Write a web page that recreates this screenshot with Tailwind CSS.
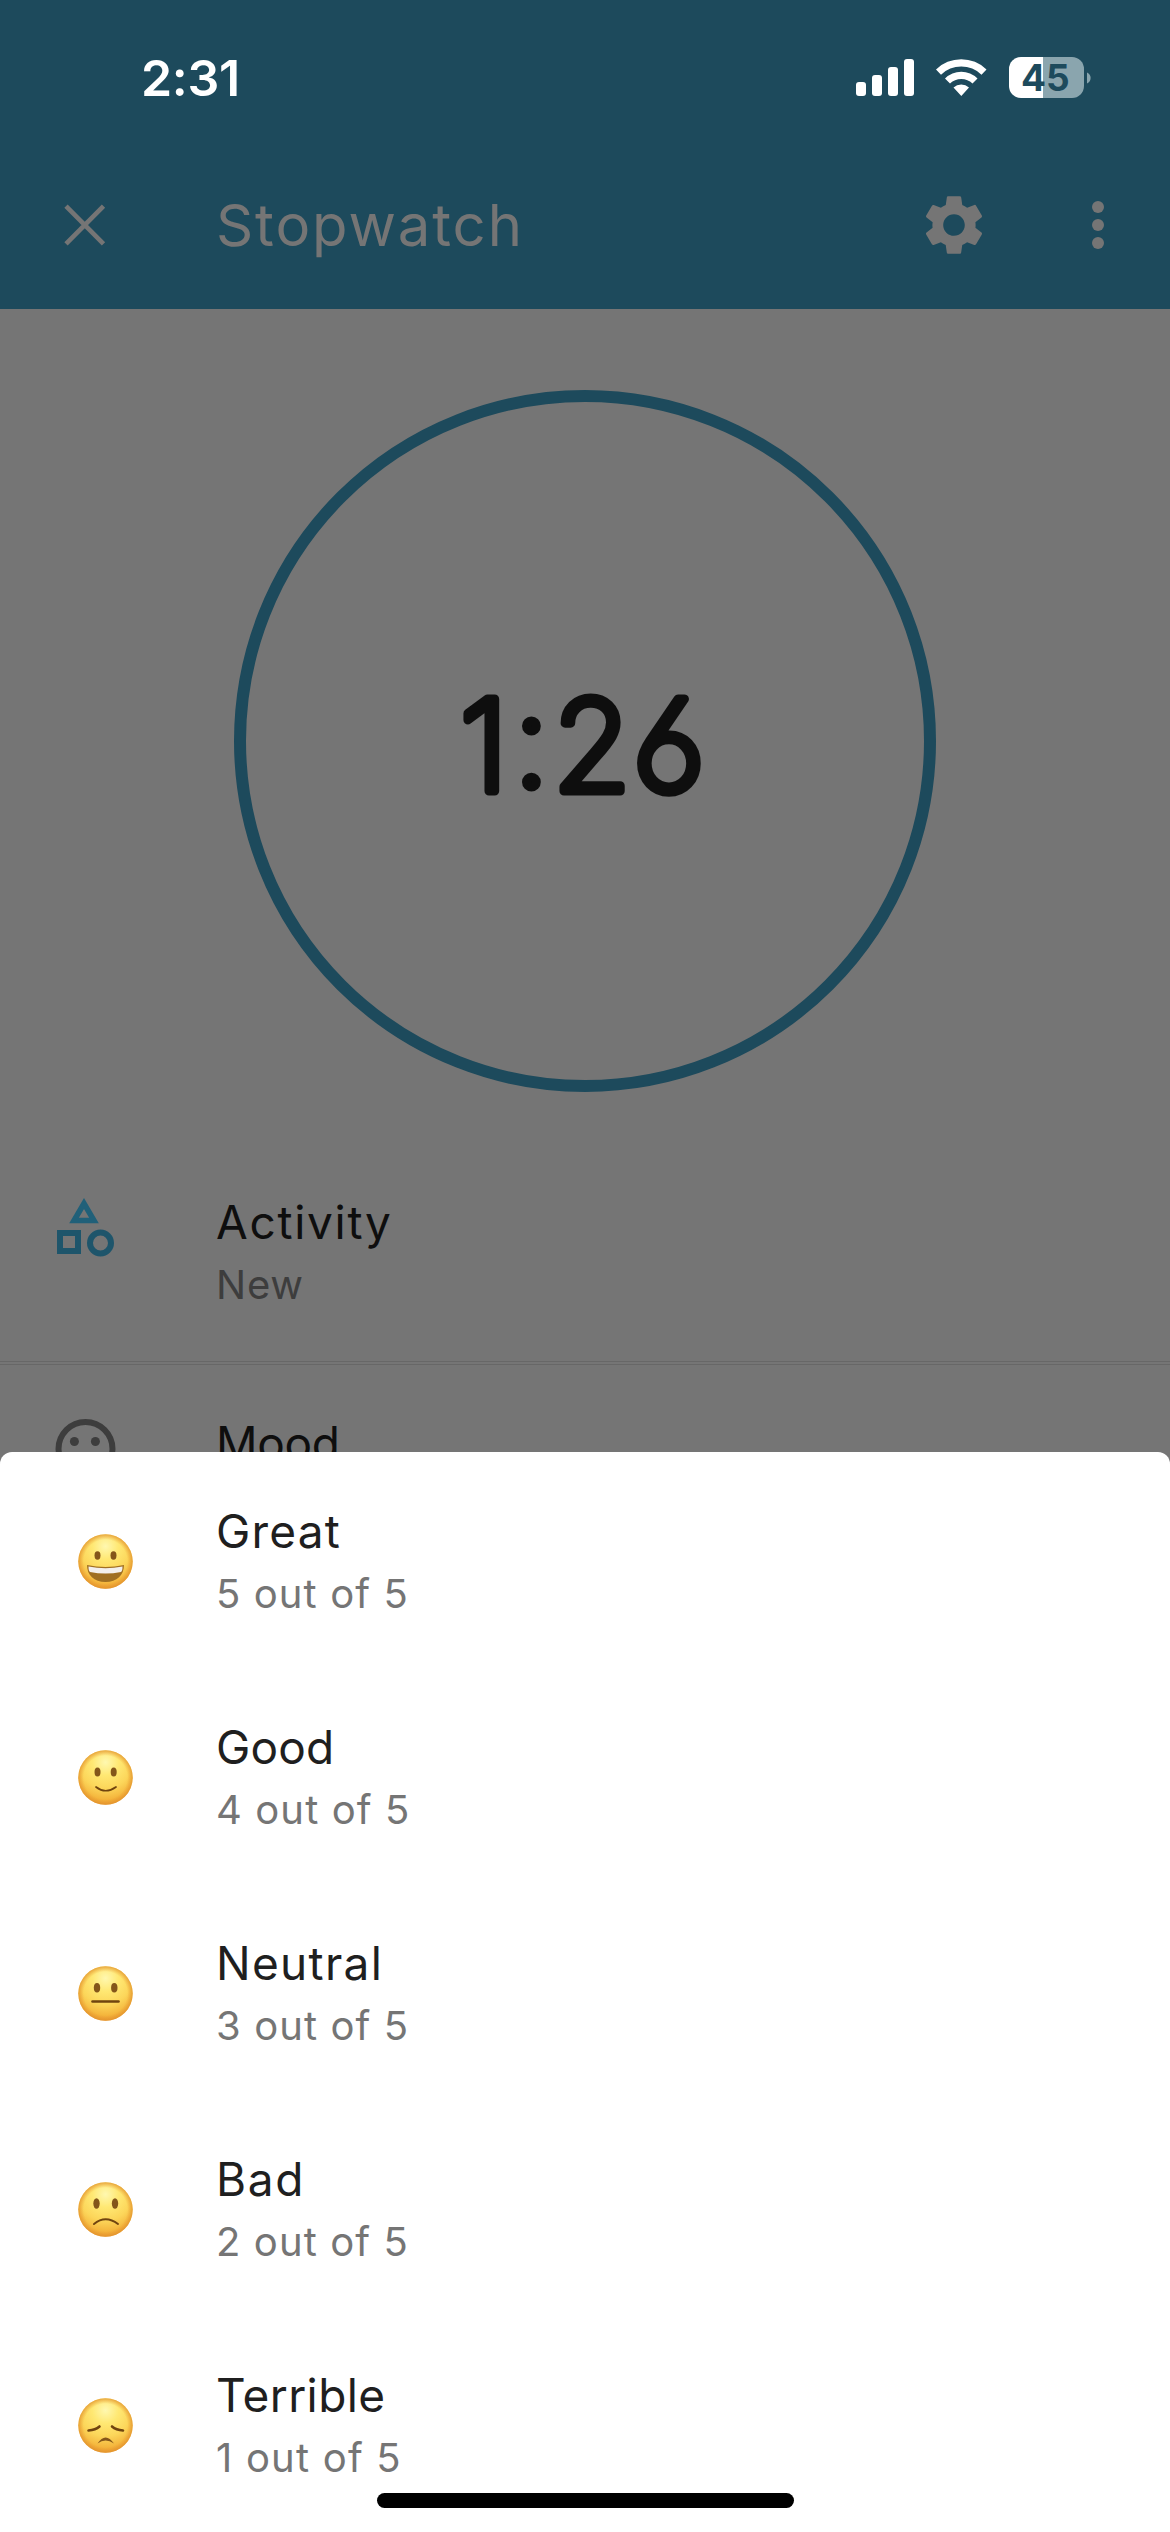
<!DOCTYPE html>
<html lang="en">
<head>
<meta charset="utf-8">
<title>Stopwatch</title>
<script src="https://cdn.jsdelivr.net/npm/@tailwindcss/browser@4"></script>
</head>
<body class="bg-[#757575] font-['Inter',sans-serif]">
<svg class="absolute size-0" aria-hidden="true">
  <defs>
    <radialGradient id="face" cx="0.5" cy="0.22" r="0.8">
      <stop offset="0" stop-color="#fff8b0"/><stop offset="0.3" stop-color="#ffe873"/><stop offset="0.6" stop-color="#fcd65a"/><stop offset="0.85" stop-color="#f4b53c"/><stop offset="1" stop-color="#ec9c30"/>
    </radialGradient>
    <radialGradient id="rim" cx="0.5" cy="0.5" r="0.5">
      <stop offset="0.8" stop-color="#e8962f" stop-opacity="0"/><stop offset="1" stop-color="#e0902c" stop-opacity="0.75"/>
    </radialGradient>
    <g id="head"><circle cx="27.5" cy="27.5" r="27.2" fill="url(#face)"/><circle cx="27.5" cy="27.5" r="27.2" fill="url(#rim)"/></g>
  </defs>
</svg>
<main class="relative flex h-[2532px] w-[1170px] flex-col overflow-hidden">
  <header class="h-[309px] shrink-0 bg-[#1d4a5c]">
    <div class="flex h-[156px] items-center pl-[141px] pr-[79px]">
      <span class="grow text-[50px] font-semibold tracking-[-0.3px] text-white">2:31</span>
      <svg class="h-[42px] w-[236px] overflow-visible" viewBox="0 0 236 42" fill="#fff">
        <rect x="1" y="25" width="10" height="14" rx="3"/><rect x="17" y="18" width="10" height="21" rx="3"/><rect x="33" y="10" width="10" height="29" rx="3"/><rect x="49" y="2" width="10" height="37" rx="3"/>
        <path d="M81 12.5a36 36 0 0 1 50.500 0l-5 5.200a29 29 0 0 0-40.500 0zM90 21.500a23 23 0 0 1 32.500 0l-5 5a16 16 0 0 0-22.500 0zM98.500 30.500a11.500 11.500 0 0 1 15.500 0l-7.700 8.500z"/>
        <path d="M166 0H188V41H166a12 12 0 0 1-12-12V12a12 12 0 0 1 12-12z"/>
        <path d="M188 0H217a12 12 0 0 1 12 12V29a12 12 0 0 1-12 12H188z" fill="#8aa5ae"/>
        <path d="M232 15.500a6 6 0 0 1 0 11z" fill="#8aa5ae"/>
        <text x="166" y="34" font-family="Inter, sans-serif" font-weight="700" font-size="37" fill="#1d4a5c">45</text>
      </svg>
    </div>
    <div class="flex h-[138px] items-center pl-12 pr-9 text-[#757575]">
      <svg class="size-[72px]" viewBox="0 0 24 24" fill="none" stroke="currentColor" stroke-width="1.550"><path d="M6 5.700 18.500 18.300M18.500 5.700 6 18.300"/></svg>
      <h1 class="ml-24 grow text-[58px] tracking-[1.9px]">Stopwatch</h1>
      <svg class="size-[72px]" viewBox="0 0 24 24" fill="currentColor"><path d="M19.140 12.940c.040-.300.060-.610.060-.940 0-.320-.020-.640-.070-.940l2.030-1.580a.49.490 0 0 0 .120-.610l-1.920-3.320a.488.488 0 0 0-.590-.220l-2.390.960c-.500-.380-1.030-.700-1.620-.940l-.360-2.540a.484.484 0 0 0-.480-.410h-3.840c-.240 0-.430.170-.470.410l-.360 2.540c-.590.240-1.130.570-1.620.940l-2.390-.960c-.220-.080-.470 0-.590.220L2.740 8.870c-.120.210-.080.470.120.610l2.030 1.580c-.050.300-.090.630-.090.940s.020.640.070.940l-2.030 1.580a.49.490 0 0 0-.120.610l1.920 3.320c.120.220.370.290.590.220l2.390-.960c.500.380 1.030.700 1.620.940l.360 2.540c.050.240.240.410.480.410h3.840c.240 0 .440-.170.470-.410l.360-2.540c.590-.240 1.130-.560 1.620-.940l2.390.960c.220.080.470 0 .590-.220l1.920-3.320c.120-.220.070-.470-.120-.610zM12 15.600A3.610 3.610 0 0 1 8.400 12c0-1.980 1.620-3.600 3.600-3.600s3.600 1.620 3.600 3.600-1.620 3.600-3.600 3.600"/></svg>
      <svg class="ml-[72px] size-[72px]" viewBox="0 0 24 24" fill="currentColor"><circle cx="12" cy="6" r="2"/><circle cx="12" cy="12" r="2"/><circle cx="12" cy="18" r="2"/></svg>
    </div>
  </header>

  <section class="flex h-[836px] shrink-0 justify-center pt-[81px]">
    <svg class="size-[702px]" viewBox="0 0 702 702">
      <circle cx="351" cy="351" r="345" fill="none" stroke="#1d4a5c" stroke-width="12"/>
      <g font-family="Inter, sans-serif" font-size="126" font-weight="200" fill="#0e0e0e" stroke="#0e0e0e" stroke-width="9" stroke-linejoin="round" style="font-feature-settings:'ss01'">
        <text><tspan x="226" y="400.500">1</tspan><tspan x="280" y="396">:</tspan><tspan x="319" y="400.500">2</tspan><tspan x="399" y="400.500">6</tspan></text>
      </g>
    </svg>
  </section>

  <section class="shrink-0">
    <div class="flex h-[216px] pl-12">
      <svg class="mt-[46px] size-[72px]" viewBox="0 0 72 72" fill="none" stroke-width="6" stroke="#1e556b"><path d="M36 12.500 26 29.500H46z" stroke-width="5.500" stroke="#206079"/><rect x="12" y="42" width="18" height="18"/><circle cx="52.500" cy="52" r="10.500"/></svg>
      <div class="ml-24 pt-[49px]">
        <p class="text-[46px] leading-[56px] tracking-[1.7px] text-[#0e0e0e]">Activity</p>
        <p class="mt-2.5 text-[40px] leading-[50px] tracking-[0.8px] text-[#3d3d3d]">New</p>
      </div>
    </div>
    <div class="h-1 border-y border-[#676767]"></div>
    <div class="flex h-[216px] pl-12">
      <svg class="mt-[48px] size-[72px]" viewBox="0 0 24 24" fill="#3d3d3d"><circle cx="12.500" cy="12" r="9" fill="none" stroke="#3d3d3d" stroke-width="2"/><circle cx="8.800" cy="9.500" r="1.500"/><circle cx="15.800" cy="9.500" r="1.500"/></svg>
      <p class="ml-24 pt-[50px] text-[46px] leading-[56px] tracking-[-0.3px] text-[#0e0e0e]">Mood</p>
    </div>
  </section>

  <div class="absolute inset-x-0 bottom-0 flex h-[1080px] flex-col overflow-hidden rounded-t-[12px] bg-white pt-[24px]">
    <div class="flex h-[216px] shrink-0 pl-[78px]">
      <svg class="mt-[58px] size-[55px]" viewBox="0 0 55 55"><use href="#head"/><g fill="#84561a"><ellipse cx="19.500" cy="21.500" rx="3" ry="4.200"/><ellipse cx="35.500" cy="21.500" rx="3" ry="4.200"/></g><path d="M9 31Q27.500 35 46 31C46 41 39 48 27.500 48S9 41 9 31z" fill="#a06f22"/><path d="M10.500 32.500Q27.500 36 44.500 32.500C44.500 36 44 37 43 38Q27.500 41 12 38C11 37 10.500 36 10.500 32.500z" fill="#f3efec"/></svg>
      <div class="ml-[83px] pt-[27px]"><p class="text-[46px] leading-[56px] tracking-[1.2px] text-[#1f1f1f]">Great</p><p class="mt-2.5 text-[40px] leading-[50px] tracking-[1.1px] text-[#757575]">5 out of 5</p></div>
    </div>
    <div class="flex h-[216px] shrink-0 pl-[78px]">
      <svg class="mt-[58px] size-[55px]" viewBox="0 0 55 55"><use href="#head"/><g fill="#84561a"><ellipse cx="19.500" cy="22" rx="3" ry="4.500"/><ellipse cx="35.700" cy="22" rx="3" ry="4.500"/></g><path d="M18 37Q27.500 44.500 38 37" fill="none" stroke="#70440f" stroke-width="1.700" stroke-linecap="round"/></svg>
      <div class="ml-[83px] pt-[27px]"><p class="text-[46px] leading-[56px] tracking-[0.2px] text-[#1f1f1f]">Good</p><p class="mt-2.5 text-[40px] leading-[50px] tracking-[1.1px] text-[#757575]">4 out of 5</p></div>
    </div>
    <div class="flex h-[216px] shrink-0 pl-[78px]">
      <svg class="mt-[58px] size-[55px]" viewBox="0 0 55 55"><use href="#head"/><g fill="#84561a"><ellipse cx="19" cy="21.700" rx="3.200" ry="4.800"/><ellipse cx="36.300" cy="21.700" rx="3.200" ry="4.800"/></g><path d="M14.500 35.500H40.500" stroke="#70440f" stroke-width="2.600" stroke-linecap="round"/></svg>
      <div class="ml-[83px] pt-[27px]"><p class="text-[46px] leading-[56px] tracking-[1.3px] text-[#1f1f1f]">Neutral</p><p class="mt-2.5 text-[40px] leading-[50px] tracking-[1.1px] text-[#757575]">3 out of 5</p></div>
    </div>
    <div class="flex h-[216px] shrink-0 pl-[78px]">
      <svg class="mt-[58px] size-[55px]" viewBox="0 0 55 55"><use href="#head"/><g fill="#84561a"><ellipse cx="18.500" cy="21.500" rx="3.200" ry="5.200"/><ellipse cx="37" cy="21.500" rx="3.200" ry="5.200"/></g><path d="M16 42Q27.500 32.500 40 42" fill="none" stroke="#70440f" stroke-width="2" stroke-linecap="round"/></svg>
      <div class="ml-[83px] pt-[27px]"><p class="text-[46px] leading-[56px] tracking-[1.6px] text-[#1f1f1f]">Bad</p><p class="mt-2.5 text-[40px] leading-[50px] tracking-[1.1px] text-[#757575]">2 out of 5</p></div>
    </div>
    <div class="flex h-[216px] shrink-0 pl-[78px]">
      <svg class="mt-[58px] size-[55px]" viewBox="0 0 55 55"><use href="#head"/><g fill="none" stroke="#70440f" stroke-linecap="round"><path d="M10.500 32.500Q17.500 32 21.500 28.500M45 32.500Q38 32 34 28.500" stroke-width="2.600"/></g><path d="M19.500 45.500Q27.500 33.500 36 45.500Q27.500 39.500 19.500 45.500z" fill="#84561a"/></svg>
      <div class="ml-[83px] pt-[27px]"><p class="text-[46px] leading-[56px] tracking-[0.4px] text-[#1f1f1f]">Terrible</p><p class="mt-2.5 text-[40px] leading-[50px] tracking-[1.2px] text-[#757575]">1 out of 5</p></div>
    </div>
  </div>
  <div class="absolute bottom-6 left-[377px] h-[15px] w-[417px] rounded-full bg-black"></div>
</main>
</body>
</html>
